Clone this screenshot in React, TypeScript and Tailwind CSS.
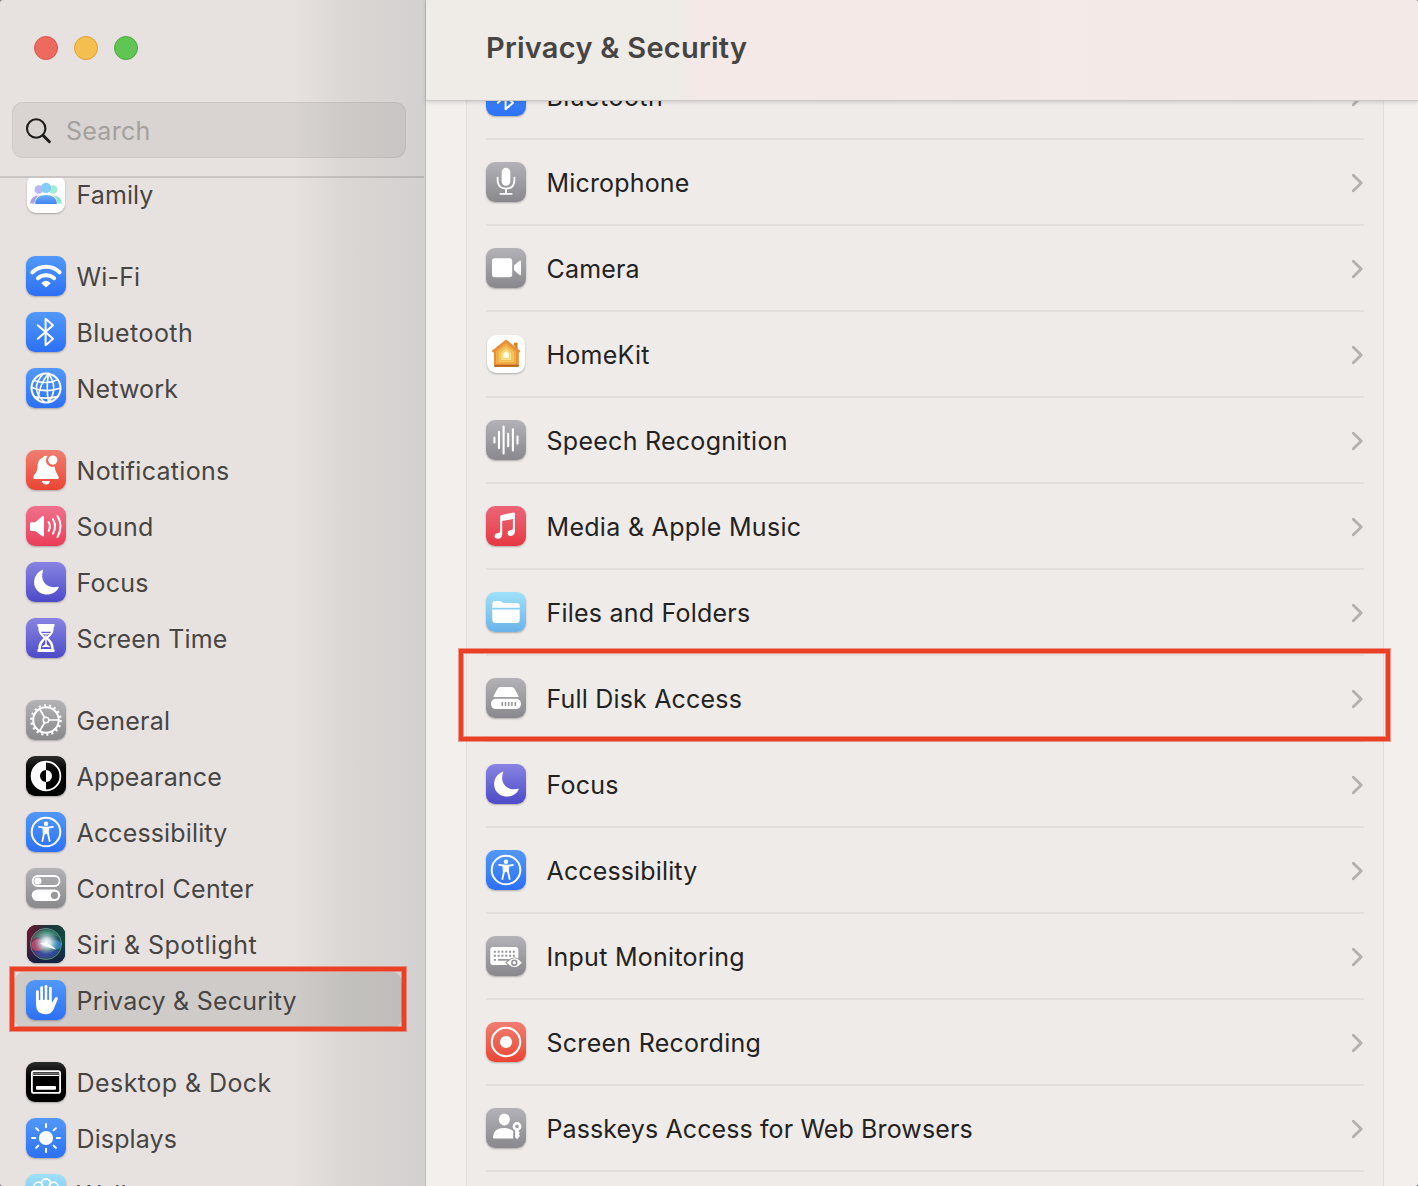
import type { ReactNode } from "react";

type Tone = "blue" | "red" | "pink" | "purple" | "gray" | "black" | "sky" | "music" | "white" | "siri";

const tones: Record<Tone, string> = {
  blue: "bg-linear-to-b from-[#5298f8] to-[#2d70f5] size-10",
  red: "bg-linear-to-b from-[#ef7d70] to-[#ea4331] size-10",
  pink: "bg-linear-to-b from-[#ef708c] to-[#ea3c58] size-10",
  purple: "bg-linear-to-b from-[#8984e1] to-[#4e49c8] size-10",
  gray: "bg-linear-to-b from-[#b3b2b6] to-[#89888d] size-10",
  black: "bg-linear-to-b from-[#2c2c2c] to-[#000000] to-60% size-10",
  sky: "bg-linear-to-b from-[#9fe1f8] to-[#6bb3e9] size-10",
  music: "bg-linear-to-b from-[#eb6577] to-[#e63741] size-10",
  white: "bg-white size-[38px] m-px",
  siri: "bg-[#152028] size-[38px] m-px",
};

function Tile({ tone, children }: { tone: Tone; children: ReactNode }) {
  return (
    <span
      className={`flex shrink-0 items-center justify-center overflow-hidden rounded-[9px] shadow-[0_1px_2px_rgba(0,0,0,0.28)] ${tones[tone]}`}
    >
      <svg viewBox="0 0 40 40" className="size-10 shrink-0" fill="none" strokeLinecap="round" strokeLinejoin="round">
        {children}
      </svg>
    </span>
  );
}

const Family = () => (
  <Tile tone="white">
    <defs>
      <linearGradient id="fam1" x1="0" y1="0" x2="0" y2="1"><stop stopColor="#71aef7" /><stop offset="1" stopColor="#3f86f5" /></linearGradient>
    </defs>
    <circle cx="12.8" cy="15.5" r="4.3" fill="#bcb5f6" />
    <circle cx="27.2" cy="15.5" r="4.3" fill="#9defd2" />
    <path d="M4 29.5Q5 21.5 13 21.5L17 24L11 29.5Z" fill="#ab9df4" />
    <path d="M36 29.5Q35 21.5 27 21.5L23 24L29 29.5Z" fill="#8de3cc" />
    <circle cx="20" cy="13.9" r="5.2" fill="#83ccf6" />
    <path d="M8.2 29.5Q9 20.3 20 20.3T31.8 29.5Z" fill="#fff" />
    <path d="M9 29.2Q10 20.9 20 20.9T31 29.2Q30.5 30 29.5 30H10.5Q9.5 30 9 29.2Z" fill="url(#fam1)" />
  </Tile>
);

const Wifi = () => (
  <Tile tone="blue">
    <path d="M6.4 16.3A19.5 19.5 0 0 1 33.6 16.3" stroke="#fff" strokeWidth="4" />
    <path d="M11.9 22.2A12.8 12.8 0 0 1 28.1 22.2" stroke="#fff" strokeWidth="4" />
    <path d="M16.2 27.2Q20 24 23.8 27.2L20 30.4Z" fill="#fff" stroke="#fff" strokeWidth="1.4" />
  </Tile>
);

const Bluetooth = () => (
  <Tile tone="blue">
    <path d="M11.8 13.2L27 26.8L19.6 33.2V6.8L27 13.2L11.8 26.8" stroke="#fff" strokeWidth="2" />
  </Tile>
);

const Network = () => (
  <Tile tone="blue">
    <g stroke="#fff" strokeWidth="1.6">
      <circle cx="20" cy="20" r="14.5" strokeWidth="2" />
      <path d="M22.5 5.6Q20 20 22.5 34.4M17.2 5.8Q3 21 18.5 34.3M22.5 5.6Q13 17 12 31.8M22.5 5.6Q33 20 22.5 34.4" />
      <path d="M7.5 12.3Q20 17 32 11.8M5.6 19.5Q20 25.5 34.4 20M8.8 28.8Q20 31.5 31.5 28.6" />
    </g>
  </Tile>
);

const Bell = () => (
  <Tile tone="red">
    <path d="M20.2 5.7Q17.5 5.9 17 7.5C12.5 9 11.8 12.5 11.6 17C11.4 22.5 8.2 24 7.3 27.2Q7 29 8.7 29H31.5Q33.2 29 32.8 27.2C32 24.5 29.2 22.5 28.6 16.3A6.3 6.3 0 0 1 21.6 6.2Z" fill="#fff" />
    <circle cx="26.8" cy="10.1" r="4.6" fill="#fff" />
    <path d="M15.8 31H24.2Q23.2 34.6 20 34.6T15.8 31Z" fill="#fff" />
  </Tile>
);

const Sound = () => (
  <Tile tone="pink">
    <path d="M5.2 16.2H9.2L16.2 10.3Q18 9.2 18 11V29.6Q18 31.3 16.2 30.2L9.2 25H5.2Q4 25 4 23.8V17.4Q4 16.2 5.2 16.2Z" fill="#fff" />
    <g stroke="#fff" strokeWidth="2">
      <path d="M22.6 16Q25.2 20.2 22.6 24.8M27 13.2Q31 20.2 27 27.6M31.5 10Q37.6 20.2 31.5 31" />
    </g>
  </Tile>
);

const Moon = () => (
  <Tile tone="purple">
    <path d="M16.6 7.7C17.3 7.4 17.3 8 17.1 8.6C13.5 18.5 20.5 27.5 31.8 24.8C32.6 24.6 33 24.9 32.7 25.6C28 35.5 13 34.5 9 25C6.5 18 9.5 10.8 16.6 7.7Z" fill="#fff" />
  </Tile>
);

const Hourglass = () => (
  <Tile tone="purple">
    <path d="M11.5 6H28.5V8.8H27.7C27.7 14.5 26.3 16.5 22.3 20C26.3 23.5 27.7 25.7 27.7 31.2H28.5V34H11.5V31.2H12.3C12.3 25.7 13.7 23.5 17.7 20C13.7 16.5 12.3 14.5 12.3 8.8H11.5Z" fill="#fff" />
    <path d="M14.8 13.8H25.2Q23.8 16.4 20 19.2Q16.2 16.4 14.8 13.8Z" fill="#625dd0" />
    <path d="M20 20.8Q25 25.5 25.3 31H14.7Q15 25.5 20 20.8Z" fill="#5551cb" />
    <path d="M20 18V27.2" stroke="#fff" strokeWidth="1.5" />
    <path d="M20 25.5Q23 27.8 24.6 29.2Q20 28.6 15.4 29.2Q17 27.8 20 25.5Z" fill="#fff" />
    <path d="M15.2 15H24.8L22 16.6H18Z" fill="#fff" />
  </Tile>
);

const Gear = () => (
  <Tile tone="gray">
    <circle cx="20" cy="20" r="14.7" stroke="#fff" strokeWidth="2.2" strokeDasharray="2.1 3.031" strokeLinecap="butt" />
    <circle cx="20" cy="20" r="12.8" stroke="#fff" strokeWidth="2" />
    <circle cx="20" cy="20" r="2.8" stroke="#fff" strokeWidth="1.6" />
    <path d="M22.9 20H32.2M18.6 17.5L13.8 9.2M18.6 22.5L13.8 30.8" stroke="#fff" strokeWidth="1.7" />
  </Tile>
);

const Appearance = () => (
  <Tile tone="black">
    <circle cx="20" cy="20" r="14.4" stroke="#fff" strokeWidth="1.8" />
    <path d="M20 5.6A14.4 14.4 0 0 0 20 34.4V26A6 6 0 0 1 20 14Z" fill="#fff" />
    <path d="M20 14A6 6 0 0 1 20 26Z" fill="#fff" />
  </Tile>
);

const Accessibility = () => (
  <Tile tone="blue">
    <circle cx="20" cy="20" r="14.3" stroke="#fff" strokeWidth="2" />
    <circle cx="20" cy="11.8" r="2.2" fill="#fff" />
    <path d="M13.1 14.9Q20 16.4 26.9 14.9M18.1 21L16.4 29M21.9 21L23.6 29" stroke="#fff" strokeWidth="1.8" />
    <path d="M17 15.4H23L22.5 22L20.6 22L20 21L19.4 22L17.5 22Z" fill="#fff" stroke="#fff" strokeWidth=".6" />
  </Tile>
);

const ControlCenter = () => (
  <Tile tone="gray">
    <rect x="6.7" y="8" width="26.8" height="10" rx="5" stroke="#fff" strokeWidth="1.8" />
    <circle cx="11.9" cy="13" r="3.6" fill="#fff" />
    <rect x="5.8" y="21.6" width="28.5" height="11.5" rx="5.75" fill="#fff" />
    <circle cx="28.5" cy="27.3" r="3.6" fill="#97969b" />
  </Tile>
);

const Siri = () => (
  <Tile tone="siri">
    <defs>
      <linearGradient id="siriBack" x1="0" y1="0" x2="1" y2=".2"><stop stopColor="#7a1034" /><stop offset=".5" stopColor="#203338" /><stop offset="1" stopColor="#10483f" /></linearGradient>
      <linearGradient id="siriFoot" x1="0" y1="0" x2="0" y2="1"><stop offset=".4" stopColor="#1a1c48" stopOpacity="0" /><stop offset="1" stopColor="#141b48" stopOpacity=".9" /></linearGradient>
      <linearGradient id="siriOrb" x1="0" y1="0" x2="1" y2="0"><stop stopColor="#c72f60" /><stop offset=".45" stopColor="#809ea3" /><stop offset="1" stopColor="#2374a6" /></linearGradient>
      <radialGradient id="siriGlow"><stop stopColor="#fff" /><stop offset=".35" stopColor="#e4f6fa" stopOpacity=".85" /><stop offset="1" stopColor="#9bd8e2" stopOpacity="0" /></radialGradient>
    </defs>
    <rect width="40" height="40" fill="url(#siriBack)" />
    <rect width="40" height="40" fill="url(#siriFoot)" />
    <circle cx="20" cy="20" r="15.6" fill="url(#siriOrb)" fillOpacity=".35" stroke="#5f9d90" strokeOpacity=".8" strokeWidth="1" />
    <path d="M6 16A15 15 0 0 1 33 13Q20 8 6 16Z" fill="#389a73" fillOpacity=".55" />
    <path d="M7 26A15 15 0 0 0 33 26Q20 29 7 26Z" fill="#364ac0" fillOpacity=".6" />
    <ellipse cx="12" cy="21" rx="6.8" ry="6" fill="#e65786" fillOpacity=".6" />
    <ellipse cx="29" cy="21" rx="6.2" ry="4.8" fill="#4a9ee6" fillOpacity=".6" />
    <circle cx="20.5" cy="18.5" r="12" fill="url(#siriGlow)" />
    <path d="M14 19.5Q21 16.5 30 25.5Q21 23.5 14 19.5Z" fill="#fff" />
  </Tile>
);

const Hand = () => (
  <Tile tone="blue">
    <g stroke="#fff" strokeWidth="2.9">
      <path d="M11.4 11.6V23M15.7 7.6V22M20 6.4V22M24.3 8.2V23" />
    </g>
    <path d="M10 20H25.75V23.2L28.7 18.3Q29.8 16.6 31.2 17.3Q32.2 17.9 31.7 19.3L27.6 29.2Q25.7 34.2 19.5 34.2Q10 34.2 10 24.5Z" fill="#fff" />
    <path d="M13.55 11V19M17.85 8V18.5M22.15 8V19" stroke="#3d82f6" strokeWidth="1" />
  </Tile>
);

const Dock = () => (
  <Tile tone="black">
    <rect x="5.9" y="9.1" width="28.2" height="21.8" rx="2" stroke="#fff" strokeWidth="1.8" />
    <path d="M7 11.2H33" stroke="#777" strokeWidth="1.5" strokeLinecap="butt" />
    <path d="M7 13.4H33" stroke="#fff" strokeWidth="1.2" strokeLinecap="butt" />
    <rect x="10" y="24" width="20" height="3.8" rx="1" fill="#fff" />
  </Tile>
);

const Sun = () => (
  <Tile tone="blue">
    <circle cx="20" cy="20" r="7.1" fill="#fff" />
    <path d="M20 6V9.2M20 30.8V34M6 20H9.2M30.8 20H34M10.1 10.1L12.4 12.4M27.6 27.6L29.9 29.9M10.1 29.9L12.4 27.6M27.6 12.4L29.9 10.1" stroke="#fff" strokeWidth="2" />
  </Tile>
);

const Flower = () => (
  <Tile tone="sky">
    <g stroke="#fff" strokeWidth="1.7">
      <circle cx="20" cy="9.3" r="4.4" />
      <circle cx="12.4" cy="12.6" r="4.4" />
      <circle cx="27.6" cy="12.6" r="4.4" />
      <circle cx="9.4" cy="20" r="4.4" />
      <circle cx="30.6" cy="20" r="4.4" />
      <circle cx="12.4" cy="27.5" r="4.4" />
      <circle cx="27.6" cy="27.5" r="4.4" />
      <circle cx="20" cy="30.7" r="4.4" />
    </g>
  </Tile>
);

const Mic = () => (
  <Tile tone="gray">
    <rect x="15.7" y="5.8" width="8.6" height="18" rx="4.3" fill="#fff" />
    <path d="M11.6 15.6V18.2Q11.8 26.4 20 26.6Q28.2 26.4 28.4 18.2V15.6M20 26.8V31.6M14.3 31.8H25.7" stroke="#fff" strokeWidth="1.8" />
  </Tile>
);

const Camera = () => (
  <Tile tone="gray">
    <rect x="6" y="10.3" width="20.2" height="19" rx="2.8" fill="#fff" />
    <path d="M28 17.6L33.3 13Q35 11.8 35 13.8V26Q35 28 33.3 26.8L28 22.2Z" fill="#fff" />
  </Tile>
);

const HomeKit = () => (
  <Tile tone="white">
    <path d="M28 11V8.8H31.5V16Z" fill="#d77a24" />
    <path d="M20 5.4L34.4 17Q34 18.8 32.8 18.4V32Q32.8 32.8 31.8 32.8H9Q8 32.8 8 32V18.4Q6.3 18.8 5.7 17Z" fill="#e98e34" />
    <path d="M8 31H32.8V32Q32.8 32.8 31.8 32.8H9Q8 32.8 8 32Z" fill="#b5641c" />
    <path d="M20 9.7L29.8 17.4V29.3H10.5V17.4Z" fill="#f0a83f" stroke="#f6b957" strokeWidth=".7" />
    <path d="M20 12.5L27.2 18V27.5H13V18Z" fill="#f3bd4b" stroke="#fad57a" strokeWidth=".8" />
    <path d="M20 15.3L24.8 19V25.5H15.3V19Z" fill="#f7d677" stroke="#fbeaa5" strokeWidth=".8" />
    <path d="M20 17.2L22.8 19.6V23.9H17.2V19.6Z" fill="#fffbe0" />
  </Tile>
);

const Wave = () => (
  <Tile tone="gray">
    <path d="M8.4 17.5V22.5M13 11.8V28.2M17.6 6.5V33.5M22.2 13.8V26.2M26.9 9.3V30.4M31.5 16.5V23.5" stroke="#fff" strokeWidth="2.1" />
  </Tile>
);

const Music = () => (
  <Tile tone="music">
    <path d="M14.2 10.6Q14.2 9.2 15.5 8.9L27.5 6.6Q28.9 6.4 28.9 7.8V25.6Q28.7 29.6 24.8 29.9Q21.5 30 21.5 27.2Q21.6 24.5 25 24Q26.9 23.8 26.9 22.6V13L16.2 15.1V28.4Q16 32.4 12 32.8Q8.6 32.9 8.5 30.1Q8.6 27.4 12 26.9Q14.2 26.7 14.2 25.2Z" fill="#fff" />
  </Tile>
);

const Folder = () => (
  <Tile tone="sky">
    <path d="M6.3 15.8V12Q6.3 9 9.3 9H13.6Q15 9 16 9.9L17.2 11H30.7Q33.7 11 33.7 14V15.8Z" fill="#fff" />
    <path d="M6.3 17.6H33.7V27.8Q33.7 31 30.6 31H9.4Q6.3 31 6.3 27.8Z" fill="#fff" />
  </Tile>
);

const Disk = () => (
  <Tile tone="gray">
    <path d="M7.2 18.8L11.5 10.7Q12.4 9 14.4 9H25.6Q27.6 9 28.5 10.7L32.8 18.8Q31.5 19 30 19H10Q8.5 19 7.2 18.8Z" fill="#fff" />
    <rect x="5" y="20.7" width="30" height="10.4" rx="5" fill="#fff" />
    <path d="M16.3 24V28M19.5 24V28M22.7 24V28M25.9 24V28M29.3 24V28" stroke="#929196" strokeWidth="1.5" strokeLinecap="butt" />
  </Tile>
);

const Keyboard = () => (
  <Tile tone="gray">
    <rect x="4.3" y="11" width="28" height="18" rx="2.8" fill="#fff" />
    <path d="M7.8 15.8H30M7.8 19.8H30" stroke="#9a999e" strokeWidth="2.1" strokeDasharray="2.1 1.7" strokeLinecap="butt" />
    <path d="M7.8 23.9H10M12 23.9H23" stroke="#9a999e" strokeWidth="1.8" strokeLinecap="butt" />
    <path d="M19.2 26.8Q28.3 16.2 37 26.8Q28.3 37.2 19.2 26.8Z" fill="#919095" />
    <path d="M21.4 26.8Q28.3 18.4 35.4 26.8Q28.3 34.8 21.4 26.8Z" fill="#fff" stroke="#fff" />
    <circle cx="28.3" cy="26.7" r="2.4" stroke="#919095" strokeWidth="1.6" />
  </Tile>
);

const Record = () => (
  <Tile tone="red">
    <circle cx="20" cy="20" r="14.2" stroke="#fff" strokeWidth="2.1" />
    <circle cx="20" cy="20" r="6.1" fill="#fff" />
  </Tile>
);

const Passkey = () => (
  <Tile tone="gray">
    <ellipse cx="18.4" cy="11.6" rx="5.5" ry="6" fill="#fff" />
    <path d="M7 29Q7.5 20 18 20Q23.5 20 27.2 23V30.6H8.3Q7 30.5 7 29Z" fill="#fff" />
    <circle cx="31" cy="18.4" r="3.1" stroke="#fff" strokeWidth="2.6" />
    <path d="M29.2 21H32.6V23.5L34 24.8L32.6 26.2L34 27.8L31.2 31.2L29.2 29.5Z" fill="#fff" />
  </Tile>
);

type Item = { label: string; icon: ReactNode; tracking: string; marked?: boolean };

const groups: Item[][] = [
  [{ label: "Family", icon: <Family />, tracking: "tracking-[0.1px]" }],
  [
    { label: "Wi-Fi", icon: <Wifi />, tracking: "tracking-[0.15px]" },
    { label: "Bluetooth", icon: <Bluetooth />, tracking: "tracking-[0.45px]" },
    { label: "Network", icon: <Network />, tracking: "tracking-[0.15px]" },
  ],
  [
    { label: "Notifications", icon: <Bell />, tracking: "tracking-[0.3px]" },
    { label: "Sound", icon: <Sound />, tracking: "tracking-[0.25px]" },
    { label: "Focus", icon: <Moon />, tracking: "tracking-[0.25px]" },
    { label: "Screen Time", icon: <Hourglass />, tracking: "tracking-[0.2px]" },
  ],
  [
    { label: "General", icon: <Gear />, tracking: "tracking-[0.25px]" },
    { label: "Appearance", icon: <Appearance />, tracking: "tracking-[0.17px]" },
    { label: "Accessibility", icon: <Accessibility />, tracking: "tracking-[0.14px]" },
    { label: "Control Center", icon: <ControlCenter />, tracking: "tracking-[0.33px]" },
    { label: "Siri & Spotlight", icon: <Siri />, tracking: "tracking-[0.48px]" },
    { label: "Privacy & Security", icon: <Hand />, tracking: "tracking-[0.24px]", marked: true },
  ],
  [
    { label: "Desktop & Dock", icon: <Dock />, tracking: "tracking-[0.45px]" },
    { label: "Displays", icon: <Sun />, tracking: "tracking-[0.12px]" },
    { label: "Wallpaper", icon: <Flower />, tracking: "tracking-[0.15px]" },
  ],
];

const rows: Item[] = [
  { label: "Bluetooth", icon: <Bluetooth />, tracking: "tracking-[0.45px]" },
  { label: "Microphone", icon: <Mic />, tracking: "tracking-[0.17px]" },
  { label: "Camera", icon: <Camera />, tracking: "tracking-[0.17px]" },
  { label: "HomeKit", icon: <HomeKit />, tracking: "tracking-[0.25px]" },
  { label: "Speech Recognition", icon: <Wave />, tracking: "tracking-[0.27px]" },
  { label: "Media & Apple Music", icon: <Music />, tracking: "tracking-[0.3px]" },
  { label: "Files and Folders", icon: <Folder />, tracking: "tracking-[0.22px]" },
  { label: "Full Disk Access", icon: <Disk />, tracking: "tracking-[0.18px]", marked: true },
  { label: "Focus", icon: <Moon />, tracking: "tracking-[0.25px]" },
  { label: "Accessibility", icon: <Accessibility />, tracking: "tracking-[0.14px]" },
  { label: "Input Monitoring", icon: <Keyboard />, tracking: "tracking-[0.27px]" },
  { label: "Screen Recording", icon: <Record />, tracking: "tracking-[0.27px]" },
  { label: "Passkeys Access for Web Browsers", icon: <Passkey />, tracking: "tracking-[0.11px]" },
];

const outline =
  "pointer-events-none absolute z-10 border-4 border-[#ea4025] shadow-[0_0_0_1px_rgba(234,64,37,0.5),inset_0_0_0_1px_rgba(234,64,37,0.5)]";

function SidebarItem({ item }: { item: Item }) {
  return (
    <li className="relative flex h-14 items-center pl-[26px]">
      {item.marked && (
        <>
          <span className="absolute inset-y-0 left-[14px] w-[388px] rounded-[10px] bg-black/10" />
          <span className={`${outline} -top-[5px] left-[10px] h-16 w-[396px]`} />
        </>
      )}
      <span className="relative">{item.icon}</span>
      <span className={`relative ml-[10.5px] pt-[2px] text-[25px] leading-8 text-[#474544] ${item.tracking}`}>{item.label}</span>
    </li>
  );
}

function PermissionRow({ item }: { item: Item }) {
  return (
    <li className="relative flex h-[86px] shrink-0 items-center border-b-2 border-[#e3dfdc]">
      {item.marked && <span className={`${outline} -top-[7px] -left-[27px] h-[92px] w-[931px]`} />}
      {item.icon}
      <span className={`ml-[20.5px] pt-[2px] text-[25px] leading-8 text-[#232222] ${item.tracking}`}>{item.label}</span>
      <svg viewBox="0 0 12 20" className="mt-[2px] ml-auto h-5 w-3" fill="none">
        <path d="M1.3 2.2L9.2 10L1.3 17.8" stroke="#b3b0ae" strokeWidth="2.8" strokeLinecap="round" strokeLinejoin="round" />
      </svg>
    </li>
  );
}

export default function App() {
  return (
    <div className="h-[1186px] w-[1418px] bg-[#77757a] font-['Inter',sans-serif]">
      <div className="flex h-full overflow-hidden rounded-[3px]">
        <aside className="flex w-[426px] shrink-0 flex-col border-r border-[#bebbba] bg-linear-to-r from-[#e7e2df] from-[292px] via-[#dad7d4] via-[345px] to-[#d3d0d0]">
          <div className="mr-px flex h-[178px] shrink-0 flex-col border-b-2 border-black/12 pl-3">
            <div className="flex gap-4 pt-9 pl-[22px]">
              <span className="size-6 rounded-full border border-[#d9564c] bg-[#ec6a5e]" />
              <span className="size-6 rounded-full border border-[#dba03a] bg-[#f4bf4f]" />
              <span className="size-6 rounded-full border border-[#4fa73f] bg-[#61c554]" />
            </div>
            <div className="mt-[42px] flex h-14 w-[394px] items-center rounded-[11px] border border-black/6 bg-black/6 pt-[2px] pl-3">
              <svg viewBox="0 0 28 28" className="size-7" fill="none" stroke="#1d1c1c" strokeLinecap="round">
                <circle cx="11.2" cy="11.5" r="9.2" strokeWidth="2.1" />
                <path d="M18 18.4L24.4 24.8" strokeWidth="2.9" />
              </svg>
              <span className="ml-[13px] text-[25px] leading-8 tracking-[0.25px] text-[#a3a09e]">Search</span>
            </div>
          </div>
          <nav className="min-h-0 flex-1 overflow-hidden">
            <div className="-mt-3 flex flex-col gap-[26px]">
              {groups.map((group, i) => (
                <ul key={i}>
                  {group.map((item) => (
                    <SidebarItem key={item.label} item={item} />
                  ))}
                </ul>
              ))}
            </div>
          </nav>
        </aside>
        <main className="flex min-w-0 flex-1 flex-col bg-[#f3efec]">
          <header className="z-20 flex h-[101px] shrink-0 items-center border-b border-[#cbc7c5] bg-linear-to-r from-[#efebe7] from-[255px] via-[#f4e9e7] via-[268px] to-[#f3eae7] pb-[4px] pl-[60px] shadow-[0_1px_4px_rgba(0,0,0,0.16)]">
            <h1 className="text-[29px] leading-9 font-semibold tracking-[0.25px] text-[#474544]">Privacy &amp; Security</h1>
          </header>
          <div className="min-h-0 flex-1 overflow-hidden pl-10">
            <ul className="-mt-[47px] flex w-[918px] flex-col border-x border-[#e1ddda] bg-[#efebe8] px-[19px] pb-20">
              {rows.map((item) => (
                <PermissionRow key={item.label} item={item} />
              ))}
            </ul>
          </div>
        </main>
      </div>
    </div>
  );
}
